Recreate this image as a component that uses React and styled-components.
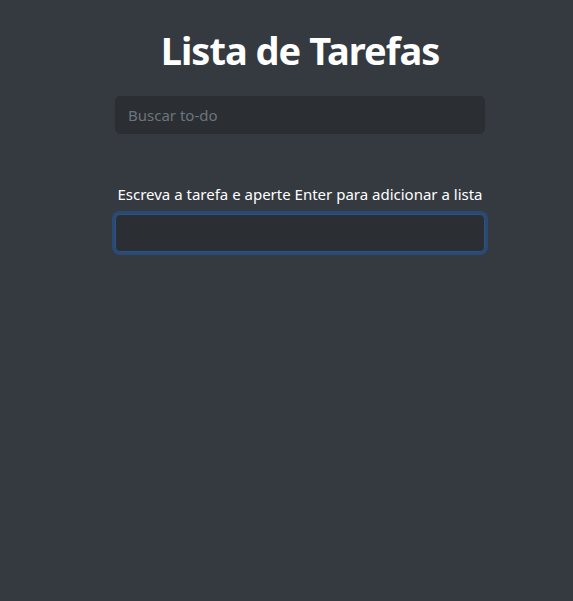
import React from "react";
import styled, { createGlobalStyle } from "styled-components";

const GlobalStyle = createGlobalStyle`
  html, body {
    margin: 0;
    padding: 0;
    background: #343a40;
    font-family: "Segoe UI", "Noto Sans", "Open Sans", sans-serif;
    color: #fff;
  }
  #root {
    min-height: 100vh;
  }
`;

const Page = styled.div`
  min-height: 100vh;
  background: #343a40;
  padding-top: 28px;
  box-sizing: border-box;
`;

const Container = styled.div`
  width: 370px;
  margin-left: 115px;
  display: flex;
  flex-direction: column;
  align-items: stretch;
`;

const Title = styled.h1`
  margin: 0 0 22px;
  font-size: 38px;
  font-weight: 700;
  letter-spacing: -1px;
  line-height: 1.2;
  text-align: center;
  color: #fff;
`;

const Input = styled.input`
  box-sizing: border-box;
  width: 100%;
  height: 38px;
  padding: 6px 12px;
  font-family: inherit;
  font-size: 15px;
  color: #dee2e6;
  background: #2b2f34;
  border: 1px solid ${(p) => (p.$focused ? "#2c5383" : "#2b2f34")};
  border-radius: 5px;
  outline: none;
  box-shadow: ${(p) => (p.$focused ? "0 0 0 3px #2a4a73" : "none")};

  &::placeholder {
    color: #6c757d;
  }
`;

const AddForm = styled.form`
  margin-top: 49px;
  display: flex;
  flex-direction: column;
  gap: 9px;
`;

const Label = styled.label`
  font-size: 15px;
  white-space: nowrap;
  text-align: center;
  color: #fff;
  line-height: 1.5;
`;

export default function App() {
  const [search, setSearch] = React.useState("");
  const [task, setTask] = React.useState("");

  return (
    <Page>
      <GlobalStyle />
      <Container>
        <Title>Lista de Tarefas</Title>
        <Input
          placeholder="Buscar to-do"
          value={search}
          onChange={(e) => setSearch(e.target.value)}
        />
        <AddForm onSubmit={(e) => e.preventDefault()}>
          <Label htmlFor="add">
            Escreva a tarefa e aperte Enter para adicionar a lista
          </Label>
          <Input
            id="add"
            $focused
            value={task}
            onChange={(e) => setTask(e.target.value)}
          />
        </AddForm>
      </Container>
    </Page>
  );
}
